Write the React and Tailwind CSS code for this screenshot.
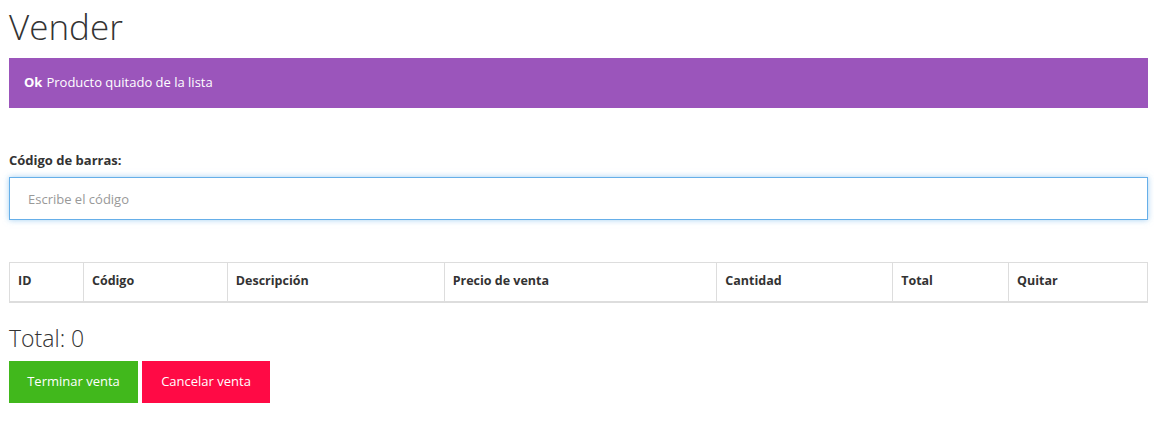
import React, { useState } from 'react';

const columns = [
  { label: 'ID', width: 'w-[74px]' },
  { label: 'Código', width: 'w-[144px]' },
  { label: 'Descripción', width: 'w-[217px]' },
  { label: 'Precio de venta', width: 'w-[273px]' },
  { label: 'Cantidad', width: 'w-[176px]' },
  { label: 'Total', width: 'w-[116px]' },
  { label: 'Quitar', width: 'w-[139px]' },
];

const Vender = () => {
  const [codigo, setCodigo] = useState('');
  const productos = [];
  const total = productos.reduce((acc, p) => acc + p.total, 0);

  return (
    <div className="min-h-[422px] bg-white px-[9px] pt-[3px] text-[13px] text-[#333] [font-family:'Open_Sans','Liberation_Sans',sans-serif]">
      <div className="w-[1139px]">
        {/* Header */}
        <h1 className="text-[35px] font-light leading-[48px] text-[#333]">Vender</h1>

        {/* Alert */}
        <div className="mt-[7px] flex h-[50px] items-center bg-[#9b55bb] px-[15px] text-white">
          <strong className="mr-[4px] font-bold">Ok</strong>
          Producto quitado de la lista
        </div>

        {/* Codigo */}
        <form className="mt-[43px]" onSubmit={(e) => e.preventDefault()}>
          <label htmlFor="codigo" className="block text-[13px] font-bold leading-[18px] text-[#333]">
            Código de barras:
          </label>
          <input
            id="codigo"
            autoFocus
            value={codigo}
            onChange={(e) => setCodigo(e.target.value)}
            placeholder="Escribe el código"
            className="mt-[8px] block h-[43px] w-full border border-[#66afe9] bg-white px-[18px] text-[13px] text-[#555] shadow-[0_0_6px_rgba(102,175,233,0.6)] outline-none placeholder:text-[#999]"
          />
        </form>

        {/* Table */}
        <table className="mt-[42px] w-full border-collapse border border-[#ddd]">
          <thead>
            <tr>
              {columns.map((col) => (
                <th
                  key={col.label}
                  className={`${col.width} h-[39px] border border-b-2 border-[#ddd] px-[8px] text-left align-middle text-[12.5px] font-bold text-[#333]`}
                >
                  {col.label}
                </th>
              ))}
            </tr>
          </thead>
          <tbody>
            {productos.map((p) => (
              <tr key={p.id}>
                <td>{p.id}</td>
              </tr>
            ))}
          </tbody>
        </table>

        {/* Total */}
        <h3 className="mt-[20px] text-[23px] font-light leading-[30px] text-[#333]">Total: {total}</h3>

        {/* Actions */}
        <div className="mt-[8px] flex gap-[4px]">
          <button className="h-[42px] w-[129px] bg-[#41b81c] text-[13px] text-white">Terminar venta</button>
          <button className="h-[42px] w-[128px] bg-[#ff0a45] text-[13px] text-white">Cancelar venta</button>
        </div>
      </div>
    </div>
  );
};

export default function App() {
  return <Vender />;
}
